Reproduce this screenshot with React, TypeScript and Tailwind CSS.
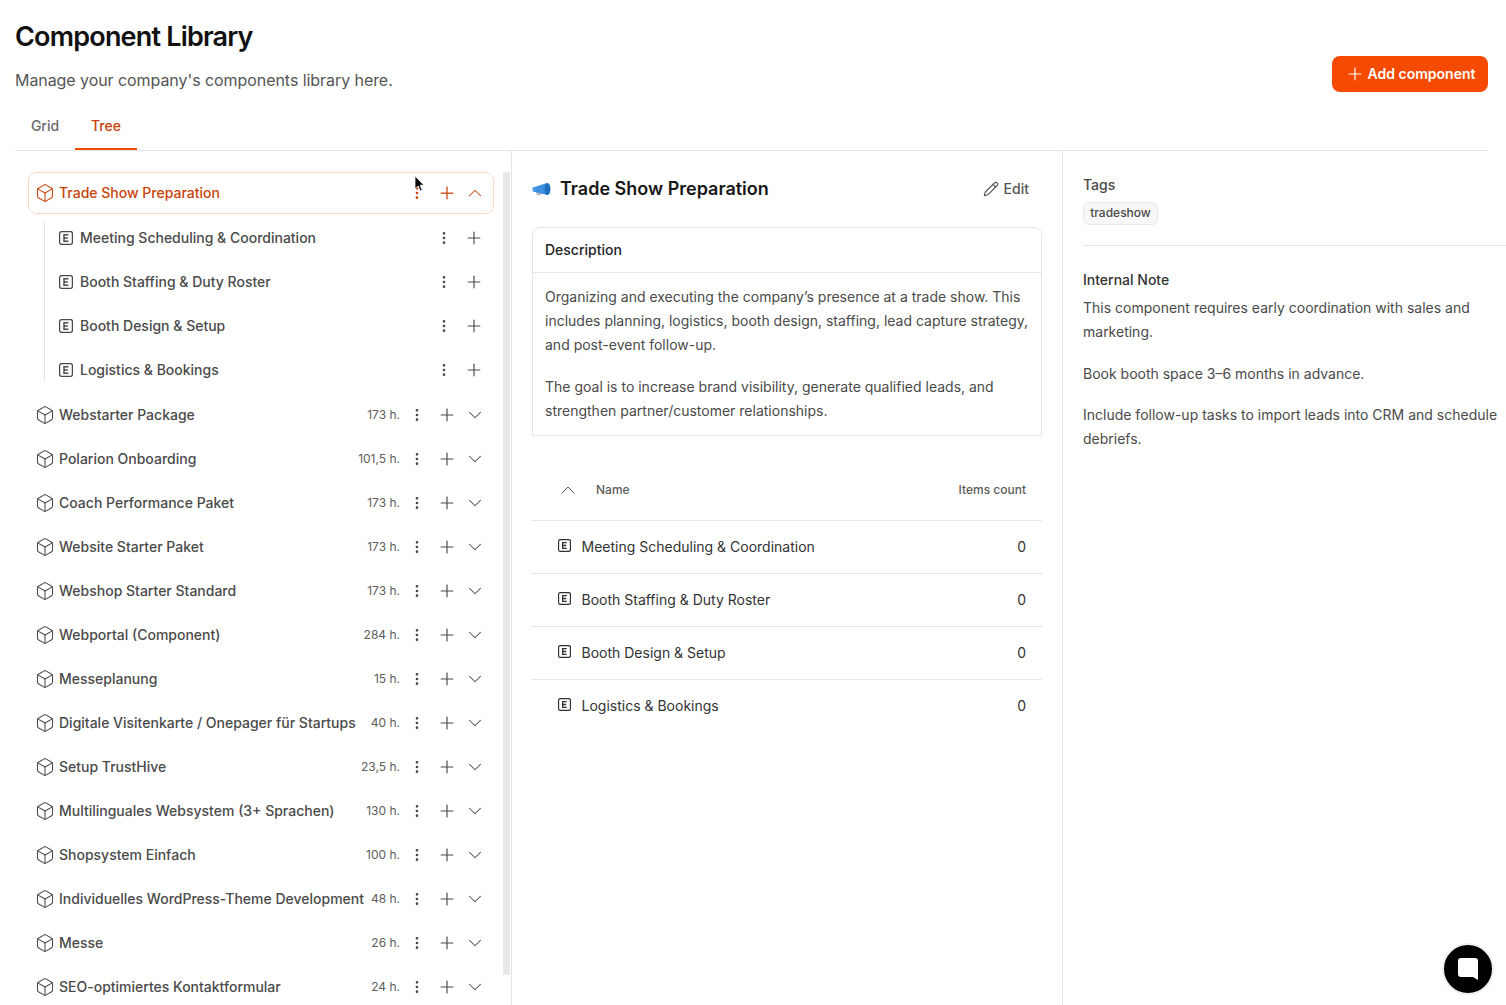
import React from 'react';
import { Box, ChevronDown, ChevronUp, EllipsisVertical, Pencil, Plus } from 'lucide-react';

const children = [
  'Meeting Scheduling & Coordination',
  'Booth Staffing & Duty Roster',
  'Booth Design & Setup',
  'Logistics & Bookings',
];

const components = [
  { name: 'Webstarter Package', hours: '173 h.' },
  { name: 'Polarion Onboarding', hours: '101,5 h.' },
  { name: 'Coach Performance Paket', hours: '173 h.' },
  { name: 'Website Starter Paket', hours: '173 h.' },
  { name: 'Webshop Starter Standard', hours: '173 h.' },
  { name: 'Webportal (Component)', hours: '284 h.' },
  { name: 'Messeplanung', hours: '15 h.' },
  { name: 'Digitale Visitenkarte / Onepager für Startups', hours: '40 h.' },
  { name: 'Setup TrustHive', hours: '23,5 h.' },
  { name: 'Multilinguales Websystem (3+ Sprachen)', hours: '130 h.' },
  { name: 'Shopsystem Einfach', hours: '100 h.' },
  { name: 'Individuelles WordPress-Theme Development', hours: '48 h.' },
  { name: 'Messe', hours: '26 h.' },
  { name: 'SEO-optimiertes Kontaktformular', hours: '24 h.' },
];

function EpicIcon({ className }: { className?: string }) {
  return (
    <svg viewBox="0 0 14 14" fill="none" stroke="currentColor" className={className}>
      <rect x="0.6" y="0.6" width="12.8" height="12.8" rx="2" strokeWidth="1.3" />
      <path d="M9.4 3.8H5v6.4h4.4M5 7h3.8" strokeWidth="1.4" />
    </svg>
  );
}

function TreeRow({ name, hours }: { name: string; hours: string }) {
  return (
    <div className="flex h-11 shrink-0 items-center pl-[7px] pr-2 text-[#4a4a4a]">
      <Box className="h-5 w-5 shrink-0" strokeWidth={1.25} />
      <span className="ml-1 flex-1 truncate text-sm font-medium">{name}</span>
      <span className="ml-1 text-xs text-[#5c5c5c]">{hours}</span>
      <EllipsisVertical className="ml-[9px] h-4 w-4 shrink-0" strokeWidth={2} />
      <Plus className="ml-3 h-5 w-5 shrink-0" strokeWidth={1.4} />
      <ChevronDown className="ml-[7px] h-[22px] w-[22px] shrink-0" strokeWidth={1.1} />
    </div>
  );
}

function MegaphoneIcon() {
  return (
    <svg viewBox="0 0 20 14" className="h-[14px] w-5">
      <path d="M1 5.5 15 1v12L1 9.5z" fill="#3b8fe0" />
      <rect x="0.5" y="5.3" width="3" height="4.2" rx="1" fill="#4ea1ea" />
      <ellipse cx="15.5" cy="7" rx="3" ry="6" fill="#1f6fc0" />
      <path d="M5 10v2.2h3.5V11" fill="none" stroke="#7a8794" strokeWidth="1" />
    </svg>
  );
}

export default function App() {
  return (
    <div className="relative h-[1005px] w-[1506px] overflow-hidden bg-white font-['Inter',sans-serif] text-[#111]">
      {/* Header */}
      <div className="flex items-start justify-between pl-[15px] pr-[18px]">
        <div>
          <h1 className="mt-[19px] text-[27px] leading-9 font-semibold tracking-[-0.03em] text-[#111]">Component Library</h1>
          <p className="mt-[13px] text-base leading-6 tracking-[-0.004em] text-[#555]">Manage your company's components library here.</p>
        </div>
        <button className="mt-14 flex h-9 w-[156px] items-center justify-center gap-[3px] rounded-lg bg-[#f54a00] text-sm font-semibold text-white">
          <Plus className="h-5 w-5" strokeWidth={1.4} />
          Add component
        </button>
      </div>

      {/* Tabs */}
      <div className="mx-[15px] mr-[18px] mt-3 flex h-[47px] items-start border-b border-[#e5e5e5] text-sm font-medium">
        <div className="flex h-[46px] w-[60px] items-center justify-center pb-[3px] text-[#6b6b6b]">Grid</div>
        <div className="flex h-[46px] w-[62px] items-center justify-center border-b-2 border-[#f54a00] pb-[1px] text-[#c8430a]">Tree</div>
      </div>

      <div className="flex h-[854px]">
        {/* Tree column */}
        <div className="relative ml-[15px] flex w-[497px] shrink-0 border-r border-[#e5e5e5] pl-[13px] pt-[21px]">
          <div className="flex w-[466px] flex-col">
            <div className="flex h-[42px] shrink-0 items-center rounded-lg border border-[#fcd9c8] pl-[6px] pr-[7px] text-[#c8430a]">
              <Box className="h-5 w-5" strokeWidth={1.25} />
              <span className="ml-1 flex-1 text-sm font-medium">Trade Show Preparation</span>
              <EllipsisVertical className="h-4 w-4" strokeWidth={2} />
              <Plus className="ml-3 h-5 w-5" strokeWidth={1.5} />
              <ChevronUp className="ml-[7px] h-[22px] w-[22px]" strokeWidth={1.1} />
            </div>
            <div className="relative ml-4 mt-[2px] flex shrink-0 flex-col">
              <div className="absolute bottom-[11px] left-0 top-[5px] w-px bg-[#e5e5e5]" />
              {children.map((child) => (
                <div key={child} className="flex h-11 items-center pl-[15px] pr-[10px] text-[#4a4a4a]">
                  <EpicIcon className="h-[14px] w-[14px] shrink-0" />
                  <span className="ml-[7px] flex-1 text-sm font-medium">{child}</span>
                  <EllipsisVertical className="h-4 w-4 shrink-0" strokeWidth={2} />
                  <Plus className="ml-3 h-5 w-5 shrink-0" strokeWidth={1.4} />
                </div>
              ))}
            </div>
            <div className="mt-[1px] flex flex-col">
              {components.map((item) => (
                <TreeRow key={item.name} name={item.name} hours={item.hours} />
              ))}
            </div>
          </div>
          {/* Scrollbar */}
          <div className="absolute right-[1px] top-[21px] h-[803px] w-[7px] bg-[#e8e8e8]" />
        </div>

        {/* Detail column */}
        <div className="w-[551px] shrink-0 border-r border-[#e5e5e5] px-5 pt-5">
          <div className="flex h-9 items-center justify-between">
            <div className="flex items-center gap-2">
              <MegaphoneIcon />
              <h2 className="text-lg font-semibold text-[#171717]">Trade Show Preparation</h2>
            </div>
            <div className="mr-[13px] flex items-center gap-[5px] text-sm font-medium text-[#555]">
              <Pencil className="h-4 w-4" strokeWidth={1.75} />
              Edit
            </div>
          </div>

          <div className="mt-5 h-[209px] rounded-t-lg border border-[#e5e5e5]">
            <div className="flex h-[45px] items-center border-b border-[#e5e5e5] px-3 text-sm font-medium text-[#222]">Description</div>
            <div className="px-3 pt-3 text-sm leading-6 text-[#4a4a4a]">
              <p>Organizing and executing the company’s presence at a trade show. This includes planning, logistics, booth design, staffing, lead capture strategy, and post-event follow-up.</p>
              <p className="mt-[18px]">The goal is to increase brand visibility, generate qualified leads, and strengthen partner/customer relationships.</p>
            </div>
          </div>

          <div className="mt-6 flex h-[61px] items-center border-b border-[#e5e5e5] pl-6 pr-4 text-xs font-medium text-[#5c5c5c]">
            <ChevronUp className="h-6 w-6" strokeWidth={1} />
            <span className="ml-4 flex-1">Name</span>
            <span>Items count</span>
          </div>
          {children.map((child) => (
            <div key={child} className="flex h-[53px] items-center border-b border-[#e5e5e5] pl-[26px] pr-4 text-sm text-[#333] last:border-transparent">
              <EpicIcon className="mb-[3px] h-[13px] w-[13px] shrink-0" />
              <span className="ml-[10.5px] flex-1">{child}</span>
              <span>0</span>
            </div>
          ))}
        </div>

        {/* Side column */}
        <div className="flex-1 pt-[23px]">
          <div className="ml-5 text-sm leading-[22px] font-medium text-[#4a4a4a]">Tags</div>
          <div className="ml-5 mt-[6px] flex h-[23px] w-[75px] items-center justify-center rounded-md border border-[#e8e8e8] bg-[#f7f7f7] pb-[2px] text-xs font-medium text-[#4a4a4a]">tradeshow</div>
          <div className="ml-5 mt-5 border-t border-[#e5e5e5]" />
          <div className="ml-5 mt-6 pr-2">
            <div className="text-sm leading-5 font-medium text-[#333]">Internal Note</div>
            <div className="mt-[6px] text-sm leading-6 text-[#4a4a4a]">
              <p>This component requires early coordination with sales and marketing.</p>
              <p className="mt-[18px]">Book booth space 3–6 months in advance.</p>
              <p className="mt-[17px]">Include follow-up tasks to import leads into CRM and schedule debriefs.</p>
            </div>
          </div>
        </div>
      </div>

      {/* Chat launcher */}
      <div className="absolute left-[1442px] top-[943px] flex h-[52px] w-[52px] items-center justify-center rounded-full border-2 border-[#f0f0f0] bg-black">
        <svg viewBox="0 0 22 24" className="h-6 w-[22px]">
          <path d="M4 1h14a3 3 0 0 1 3 3v19l-5-3H4a3 3 0 0 1-3-3V4a3 3 0 0 1 3-3z" fill="#fff" />
        </svg>
      </div>

      {/* Mouse cursor */}
      <svg viewBox="0 0 12 18" className="absolute left-[414px] top-[175px] h-[18px] w-3">
        <path d="M1 1v13l3.2-3 2 5 2-.8-2-5H10z" fill="#000" stroke="#fff" strokeWidth="0.8" />
      </svg>
    </div>
  );
}
